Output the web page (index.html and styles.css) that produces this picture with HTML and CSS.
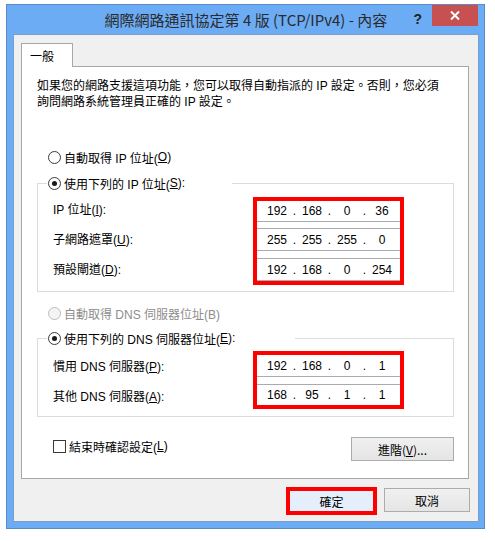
FILE: index.html
```html
<!doctype html>
<html lang="zh-Hant">
  <head>
    <meta charset="utf-8"/>
    <title>網際網路通訊協定第 4 版 (TCP/IPv4) - 內容</title>
    <link rel="stylesheet" href="styles.css">
  </head>
  <body>
    <div class="window">
      <!-- title bar -->
      <div class="titlebar">
        <div class="title">網際網路通訊協定第 4 版 (TCP/IPv4) - 內容</div>
        <div class="controls">
          <span class="help">?</span>
          <span class="close">
            <svg width="10" height="9" viewBox="0 0 10 9"><path d="M1 0.5 L9 8.5 M9 0.5 L1 8.5" stroke="#fff" stroke-width="2"/></svg>
          </span>
        </div>
      </div>

      <div class="client">
        <div class="tab">一般</div>
        <div class="panel">
          <p class="intro">如果您的網路支援這項功能，您可以取得自動指派的 IP 設定。否則，您必須<br>詢問網路系統管理員正確的 IP 設定。</p>

          <div class="radio-row first"><span class="radio"></span>自動取得 IP 位址(<u>O</u>)</div>

          <div class="group group-ip">
            <div class="group-head head-ip"><span class="radio on"></span>使用下列的 IP 位址(<u>S</u>):</div>
            <div class="fields">
              <div class="labels labels-ip">
                <div>IP 位址(<u>I</u>):</div>
                <div>子網路遮罩(<u>U</u>):</div>
                <div>預設閘道(<u>D</u>):</div>
              </div>
              <div class="ipbox ipbox-ip">
                <div class="field f1"><span>192</span><i>.</i><span>168</span><i>.</i><span>0</span><i>.</i><span>36</span></div>
                <div class="field f2"><span>255</span><i>.</i><span>255</span><i>.</i><span>255</span><i>.</i><span>0</span></div>
                <div class="field f3"><span>192</span><i>.</i><span>168</span><i>.</i><span>0</span><i>.</i><span>254</span></div>
              </div>
            </div>
          </div>

          <div class="radio-row second disabled"><span class="radio off"></span>自動取得 DNS 伺服器位址(B)</div>

          <div class="group group-dns">
            <div class="group-head head-dns"><span class="radio on"></span>使用下列的 DNS 伺服器位址(<u>E</u>):</div>
            <div class="fields fields-dns">
              <div class="labels labels-dns">
                <div>慣用 DNS 伺服器(<u>P</u>):</div>
                <div>其他 DNS 伺服器(<u>A</u>):</div>
              </div>
              <div class="ipbox ipbox-dns">
                <div class="field d1"><span>192</span><i>.</i><span>168</span><i>.</i><span>0</span><i>.</i><span>1</span></div>
                <div class="field d2"><span>168</span><i>.</i><span>95</span><i>.</i><span>1</span><i>.</i><span>1</span></div>
              </div>
            </div>
          </div>

          <div class="bottom-row">
            <label class="check"><span class="box"></span>結束時確認設定(<u>L</u>)</label>
            <button class="btn btn-adv">進階(<u>V</u>)...</button>
          </div>
        </div>

        <div class="dialog-buttons">
          <button class="btn btn-ok">確定</button>
          <button class="btn btn-cancel">取消</button>
        </div>
      </div>
    </div>
  </body>
</html>
```

FILE: styles.css
```css
/* page */
body{
  margin: 0;
  background: #fff;
  font-family: "Liberation Sans", "Noto Sans CJK TC", sans-serif;
  font-size: 12px;
  color: #000;
}

/* window frame */
.window{
  margin: 4px 0 0 6px;
  width: 479px;
  height: 525px;
  box-sizing: border-box;
  border: 1px solid #5a8bc8;
  background: #6cacf4;
  padding: 0 5px 6px 6px;
}
.titlebar{
  display: grid;
  height: 29px;
}
.title,
.controls{
  grid-area: 1 / 1;
}
.title{
  text-align: center;
  line-height: 29px;
  font-size: 15px;
  color: #2b2b2b;
  font-family: "Noto Sans CJK TC", "Liberation Sans", sans-serif;
}
.controls{
  justify-self: end;
  display: flex;
  align-items: flex-start;
  margin-right: 1px;
}
.help{
  margin-top: 5px;
  margin-right: 10px;
  font-weight: bold;
  font-size: 14px;
  line-height: 18px;
  color: #222;
}
.close{
  width: 46px;
  height: 21px;
  background: #c75050;
  display: flex;
  align-items: center;
  justify-content: center;
}

/* client area */
.client{
  border: 1px solid #7b9fcc;
  background: #f0f0f0;
  height: 488px;
  box-sizing: border-box;
  padding: 8px 9px 6px 7px;
}
.tab{
  position: relative;
  width: 52px;
  height: 24px;
  box-sizing: border-box;
  border: 1px solid #a8a8a8;
  border-bottom: none;
  background: #fff;
  padding-left: 8px;
  line-height: 23px;
  margin-bottom: -1px;
  font-family: "Noto Sans CJK TC", sans-serif;
}
.panel{
  border: 1px solid #a8a8a8;
  background: #fff;
  padding: 11px 14px 17px 15px;
}
.intro{
  margin: 0;
  line-height: 16px;
  white-space: nowrap;
}

/* radios */
.radio-row{
  display: flex;
  align-items: center;
  height: 16px;
  padding-left: 11px;
}
.radio-row.first{ margin-top: 39px; }
.radio-row.second{ margin-top: 13px; }
.disabled{ color: #8d8d8d; }
.radio{
  width: 13px;
  height: 13px;
  box-sizing: border-box;
  border: 1px solid #3a3a3a;
  border-radius: 50%;
  background: #fff;
  margin-right: 3px;
  display: flex;
  align-items: center;
  justify-content: center;
  flex: none;
}
.radio.on::after{
  content: "";
  width: 5px;
  height: 5px;
  border-radius: 50%;
  background: #1a1a1a;
}
.radio.off{
  border-color: #bcbcbc;
  background: #f4f4f4;
}

/* group boxes */
.group{
  border: 1px solid #dcdcdc;
  padding: 0 0 6px 15px;
}
.group-ip{ margin-top: 18px; }
.group-dns{ margin-top: 17px; padding-bottom: 7px; }
.group-head{
  display: flex;
  align-items: center;
  height: 16px;
  margin: -9px 0 0 -6px;
  padding-left: 1px;
  background: #fff;
}
.head-ip{ width: 184px; }
.head-dns{ width: 247px; }
.fields{
  display: flex;
  margin-top: 6px;
}
.fields-dns{ margin-top: 5px; }
.labels{
  width: 200px;
  line-height: 16px;
  display: flex;
  flex-direction: column;
  gap: 14px;
}
.labels-ip{ padding-top: 5px; }
.labels-dns{ padding-top: 8px; }

/* ip address boxes */
.ipbox{
  width: 151px;
  box-sizing: border-box;
  border: 4px solid #f00;
  background: #fff;
}
.ipbox-ip{ height: 88px; }
.ipbox-dns{ height: 58px; }
.field{
  display: grid;
  grid-template-columns: 28px 7px 28px 7px 28px 7px 28px;
  padding-left: 6px;
  box-sizing: border-box;
  border-top: 1px solid #a9abb2;
  border-bottom: 1px solid #a9abb2;
  align-items: center;
  text-align: center;
}
.field i{
  font-style: normal;
}
.f1{ height: 21px; border-top: none; }
.f2{ height: 23px; margin-top: 6px; }
.f3{ height: 23px; margin-top: 7px; }
.d1{ height: 22px; border-top: none; }
.d2{ height: 21px; margin-top: 7px; border-bottom: none; }

/* bottom of panel */
.bottom-row{
  display: flex;
  justify-content: space-between;
  align-items: center;
  margin-top: 20px;
  padding-left: 16px;
}
.check{
  display: flex;
  align-items: center;
  margin-bottom: 6px;
}
.box{
  width: 13px;
  height: 13px;
  box-sizing: border-box;
  border: 1px solid #3a3a3a;
  background: #fff;
  margin-right: 3px;
}
.btn{
  font-family: "Noto Sans CJK TC", "Liberation Sans", sans-serif;
  font-size: 12px;
  color: #000;
  box-sizing: border-box;
  border: 1px solid #acacac;
  background: linear-gradient(#f0f0f0, #e5e5e5);
  padding: 0;
  height: 24px;
}
.btn-adv{ width: 103px; }

/* dialog buttons */
.dialog-buttons{
  display: flex;
  justify-content: flex-end;
  align-items: flex-start;
  gap: 7px;
  margin-top: 8px;
  margin-right: -1px;
}
.btn-ok{
  width: 91px;
  height: 28px;
  border: 4px solid #f00;
  background: #e4effb;
}
.btn-cancel{
  width: 86px;
  margin-top: 1px;
}
```
